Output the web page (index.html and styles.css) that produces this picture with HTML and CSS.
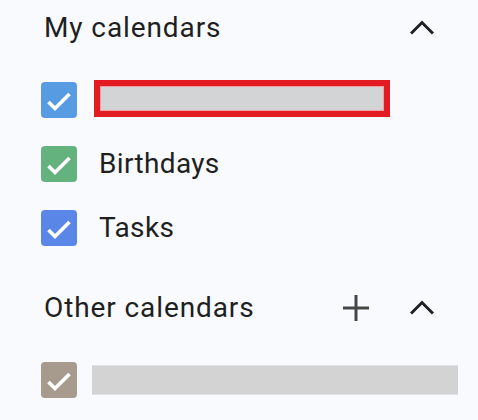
FILE: index.html
```html
<!DOCTYPE html>
<html>
<head>
<meta charset="utf-8">
<link rel="stylesheet" href="styles.css">
</head>
<body>
<div class="panel">
  <section class="group">
    <div class="group-head">
      <h2 class="group-title">My calendars</h2>
      <div class="head-actions">
        <button class="icon-btn" aria-label="Collapse">
          <svg width="24" height="24" viewBox="0 0 24 24"><polyline points="1,17.5 12,6.5 23,17.5" fill="none" stroke="#1f1f1f" stroke-width="3"/></svg>
        </button>
      </div>
    </div>
    <ul class="cal-list">
      <li class="cal-row">
        <span class="check blue"><svg viewBox="0 0 36 36"><polyline points="7.5,20 14,26.5 28.5,12" fill="none" stroke="#fff" stroke-width="3.6"/></svg></span>
        <span class="redacted-box"><span class="redacted-fill"></span></span>
      </li>
      <li class="cal-row">
        <span class="check green"><svg viewBox="0 0 36 36"><polyline points="7.5,20 14,26.5 28.5,12" fill="none" stroke="#fff" stroke-width="3.6"/></svg></span>
        <span class="cal-name">Birthdays</span>
      </li>
      <li class="cal-row">
        <span class="check indigo"><svg viewBox="0 0 36 36"><polyline points="7.5,20 14,26.5 28.5,12" fill="none" stroke="#fff" stroke-width="3.6"/></svg></span>
        <span class="cal-name">Tasks</span>
      </li>
    </ul>
  </section>
  <section class="group">
    <div class="group-head">
      <h2 class="group-title">Other calendars</h2>
      <div class="head-actions">
        <button class="icon-btn" aria-label="Add">
          <svg width="28" height="28" viewBox="0 0 28 28"><path d="M14 1V27M1 14H27" fill="none" stroke="#444746" stroke-width="3"/></svg>
        </button>
        <button class="icon-btn" aria-label="Collapse">
          <svg width="24" height="24" viewBox="0 0 24 24"><polyline points="1,17.5 12,6.5 23,17.5" fill="none" stroke="#1f1f1f" stroke-width="3"/></svg>
        </button>
      </div>
    </div>
    <ul class="cal-list">
      <li class="cal-row">
        <span class="check taupe"><svg viewBox="0 0 36 36"><polyline points="7.5,20 14,26.5 28.5,12" fill="none" stroke="#fff" stroke-width="3.6"/></svg></span>
        <span class="redacted-bar"></span>
      </li>
    </ul>
  </section>
</div>
</body>
</html>
```

FILE: styles.css
```css
html, body {
  margin: 0;
  padding: 0;
  background: #f8fafd;
}
body {
  font-family: Roboto, "Noto Sans", Arial, sans-serif;
  color: #1f1f1f;
  width: 478px;
  height: 420px;
  overflow: hidden;
}
.panel {
  display: flex;
  flex-direction: column;
}
.group-head {
  height: 56px;
  display: flex;
  align-items: center;
  justify-content: space-between;
  padding: 0 32px 0 44px;
}
.group-title {
  margin: 0;
  font-size: 28px;
  font-weight: 400;
  line-height: 40px;
  letter-spacing: 0.9px;
}
.head-actions {
  display: flex;
  align-items: center;
  gap: 18px;
}
.icon-btn {
  width: 48px;
  height: 48px;
  padding: 0;
  border: 0;
  background: transparent;
  display: flex;
  align-items: center;
  justify-content: center;
}
.cal-list {
  list-style: none;
  margin: 0;
  padding: 12px 0 20px 0;
}
.cal-row {
  height: 64px;
  display: flex;
  align-items: center;
  padding-left: 41px;
}
.check {
  width: 36px;
  height: 36px;
  border-radius: 4px;
  flex: none;
  display: block;
}
.check svg {
  width: 36px;
  height: 36px;
  display: block;
}
.blue { background: #579be2; }
.green { background: #64b27e; }
.indigo { background: #5a86e8; }
.taupe { background: #a69b8d; }
.cal-name {
  margin-left: 22px;
  font-size: 28px;
  line-height: 40px;
  letter-spacing: 0.35px;
}
.redacted-box {
  margin-left: 17px;
  margin-top: -3px;
  width: 284px;
  height: 25px;
  border: 6px solid #e31c23;
  display: flex;
}
.redacted-fill {
  flex: 1;
  background: #d3d4d5;
  border: 1px solid #f0a0a2;
}
.redacted-bar {
  margin-left: 15px;
  width: 366px;
  height: 30px;
  background: #d3d3d3;
  border-top: 1px solid #e2e3e6;
  border-bottom: 1px solid #e2e3e6;
  box-sizing: border-box;
}
```
